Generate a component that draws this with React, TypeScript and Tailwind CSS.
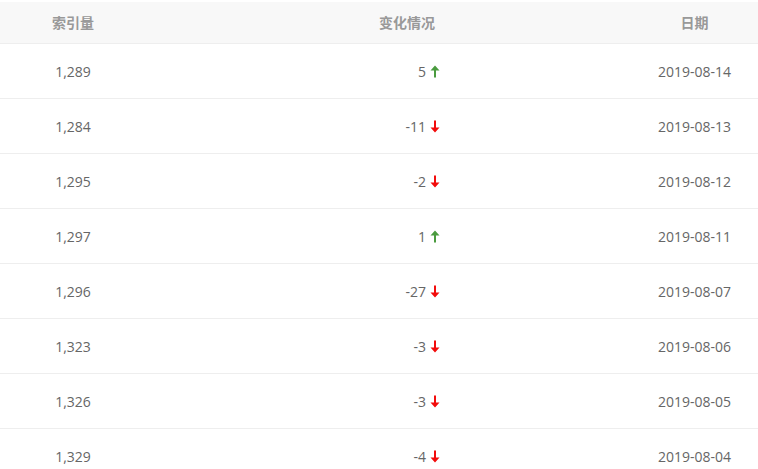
import React from 'react';

interface Row {
  count: string;
  change: number;
  date: string;
}

const rows: Row[] = [
  { count: '1,289', change: 5, date: '2019-08-14' },
  { count: '1,284', change: -11, date: '2019-08-13' },
  { count: '1,295', change: -2, date: '2019-08-12' },
  { count: '1,297', change: 1, date: '2019-08-11' },
  { count: '1,296', change: -27, date: '2019-08-07' },
  { count: '1,323', change: -3, date: '2019-08-06' },
  { count: '1,326', change: -3, date: '2019-08-05' },
  { count: '1,329', change: -4, date: '2019-08-04' },
];

const Arrow: React.FC<{ up: boolean }> = ({ up }) => (
  <svg width="10" height="13" viewBox="0 0 10 13" className="ml-[4px]">
    {up ? (
      <path d="M5 0.5 L9.5 5.5 L6 5.5 L6 12.5 L4 12.5 L4 5.5 L0.5 5.5 Z" fill="#4a9b3f" />
    ) : (
      <path d="M5 12.5 L9.5 7.5 L6 7.5 L6 0.5 L4 0.5 L4 7.5 L0.5 7.5 Z" fill="#f20c0c" />
    )}
  </svg>
);

const cols = 'grid grid-cols-[146px_294px_1fr_127px] items-center';

export default function App() {
  return (
    <div className="w-[758px] h-[469px] overflow-hidden bg-white pt-[2px] text-[14px] text-[#666]" style={{ fontFamily: '"Open Sans", "Noto Sans CJK SC", sans-serif' }}>
      <div className={`${cols} h-[42px] bg-[#f8f8f8] border-b border-[#eeeeee] font-bold text-[#999]`} style={{ fontFamily: '"Noto Sans CJK SC", sans-serif' }}>
        <div className="text-center">索引量</div>
        <div className="text-right pr-[5px]">变化情况</div>
        <div />
        <div className="text-center">日期</div>
      </div>
      {rows.map((r) => (
        <div key={r.date} className={`${cols} h-[55px] border-b border-[#eeeeee]`}>
          <div className="text-center">{r.count}</div>
          <div className="flex justify-end items-center">
            <span>{r.change}</span>
            <Arrow up={r.change > 0} />
          </div>
          <div />
          <div className="text-center">{r.date}</div>
        </div>
      ))}
    </div>
  );
}
